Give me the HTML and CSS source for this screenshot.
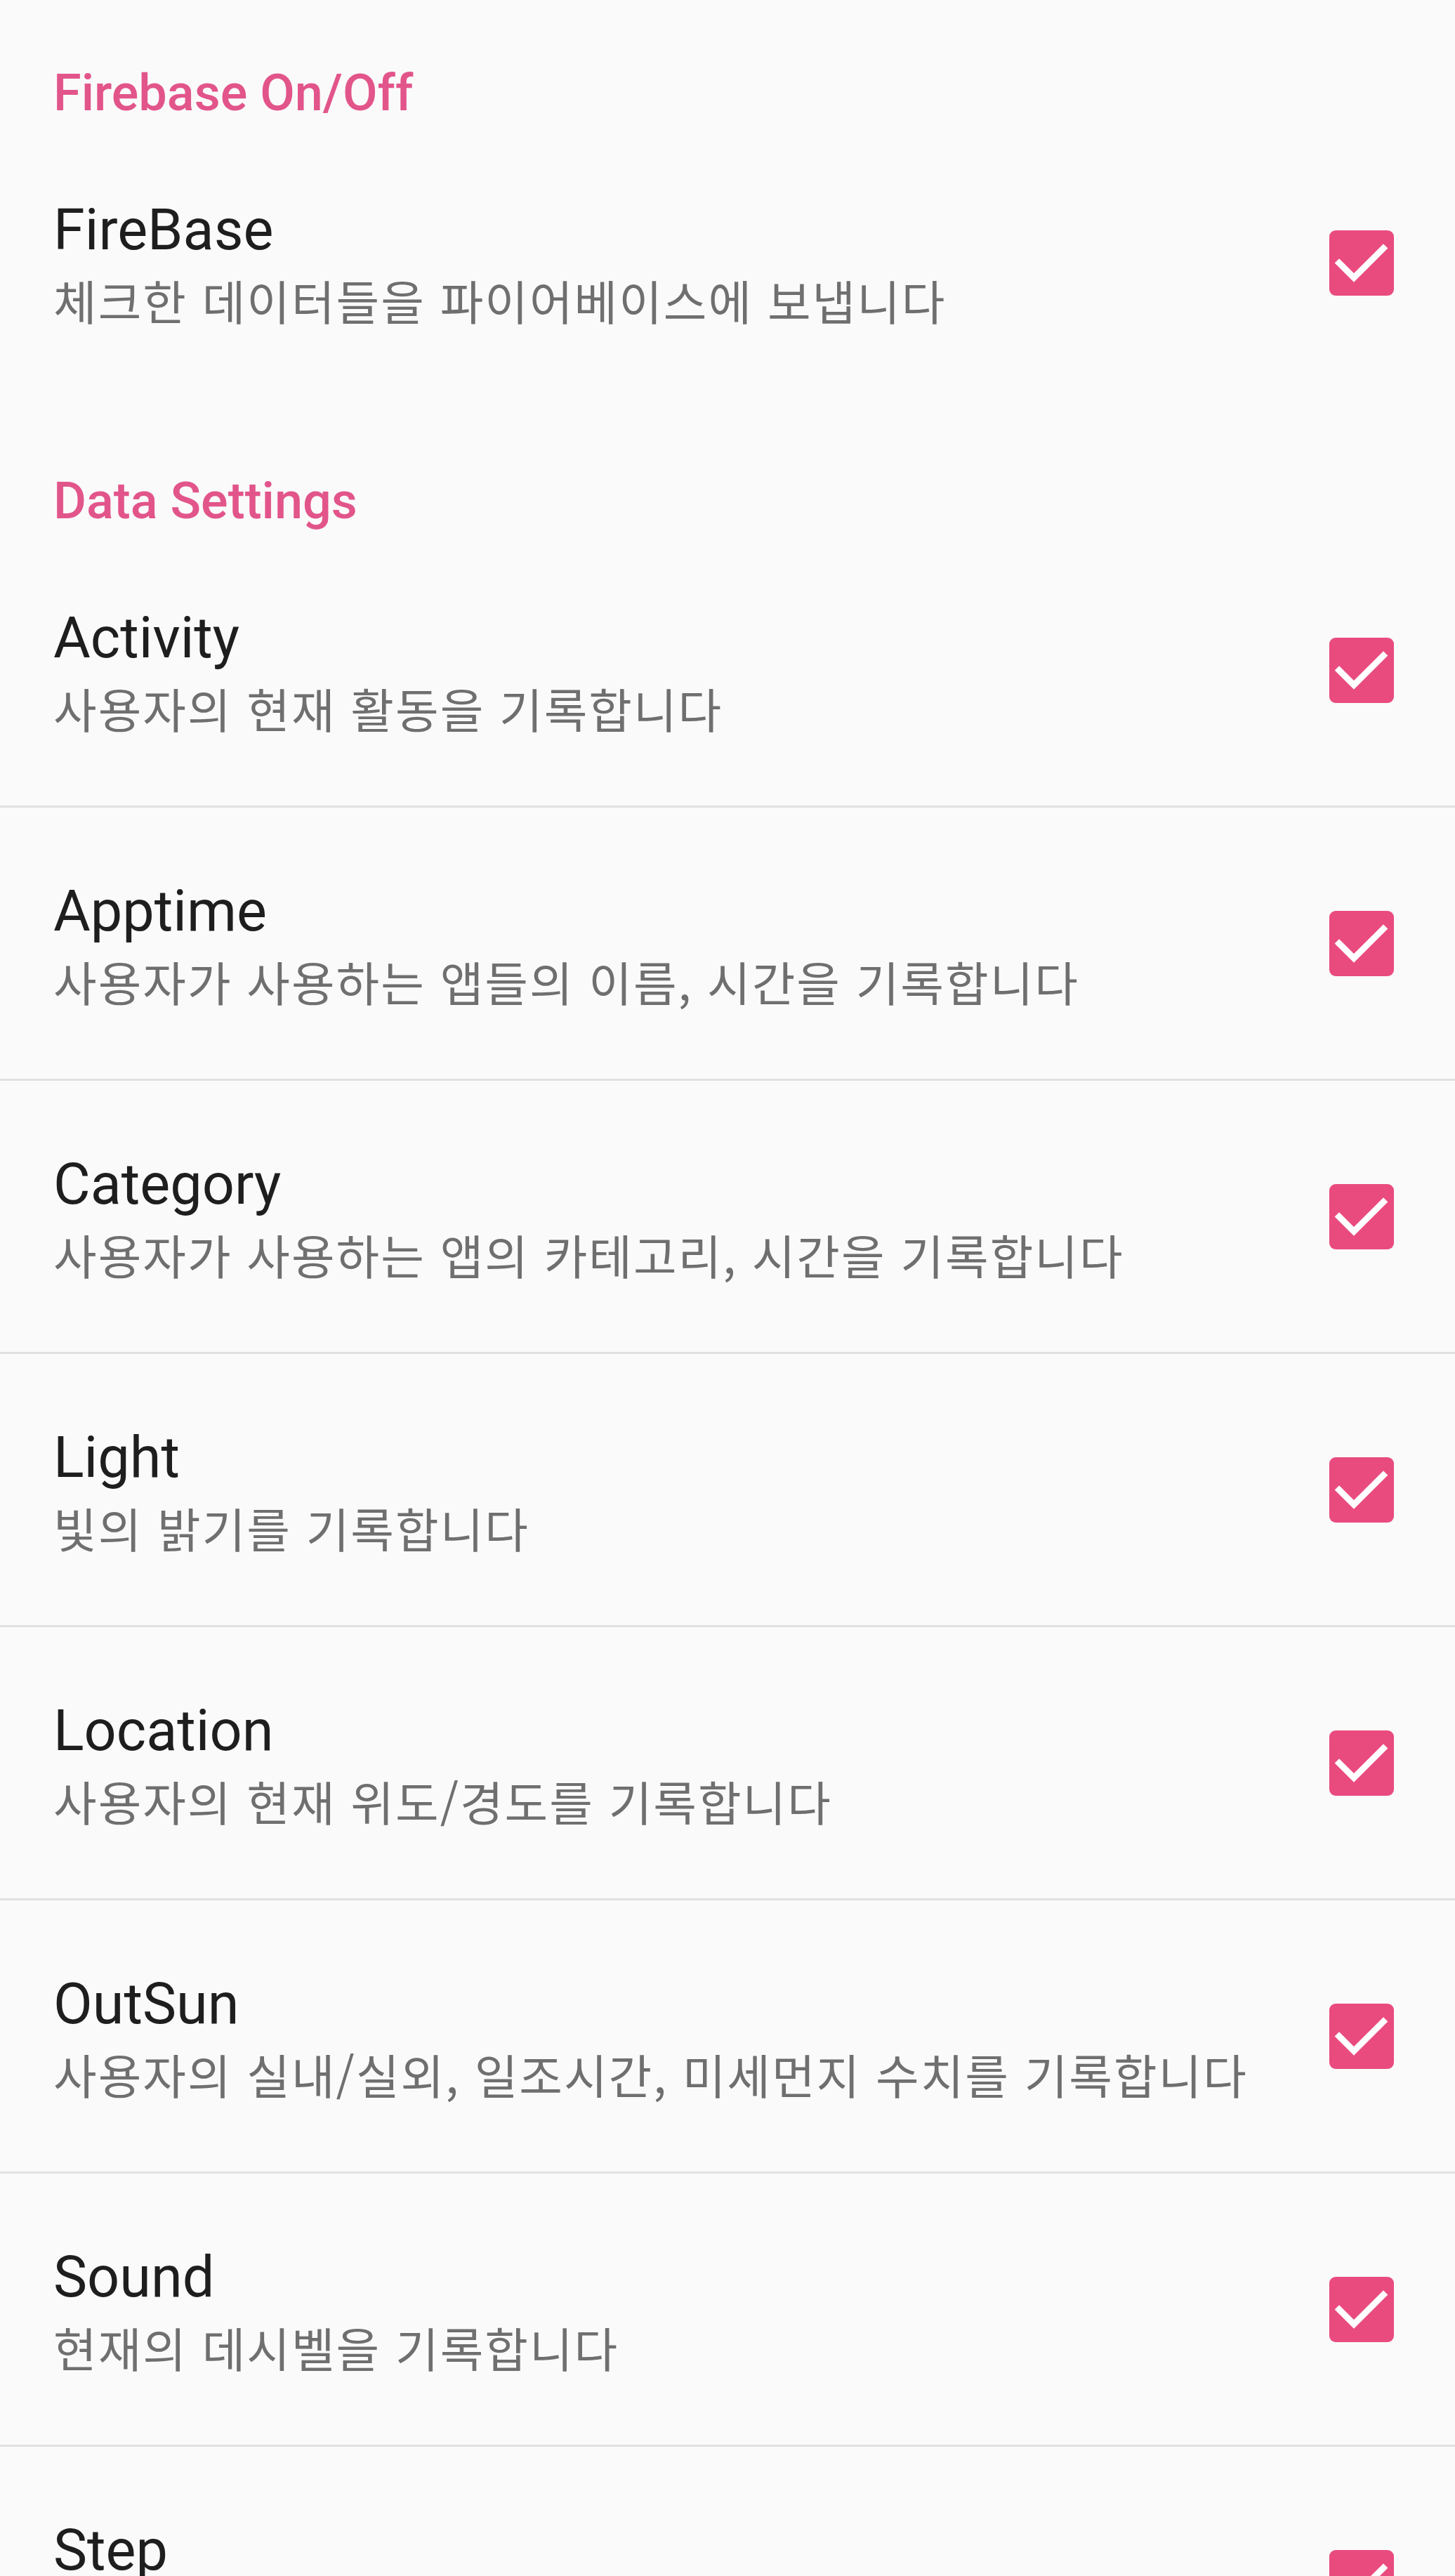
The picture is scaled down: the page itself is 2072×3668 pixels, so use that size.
FILE: index.html
```html
<!DOCTYPE html>
<html lang="ko">
<head>
<meta charset="utf-8">
<title>Settings</title>
<link rel="stylesheet" href="styles.css">
</head>
<body>
<div class="screen">
  <div class="category category--first">Firebase On/Off</div>
  <div class="pref pref--plain">
    <div class="pref-text">
      <div class="pref-title">FireBase</div>
      <div class="pref-summary">체크한 데이터들을 파이어베이스에 보냅니다</div>
    </div>
    <span class="checkbox"><svg viewBox="0 0 92 92"><polyline points="14,46 35,67 77,25"/></svg></span>
  </div>

  <div class="category">Data Settings</div>
  <div class="pref">
    <div class="pref-text">
      <div class="pref-title">Activity</div>
      <div class="pref-summary">사용자의 현재 활동을 기록합니다</div>
    </div>
    <span class="checkbox"><svg viewBox="0 0 92 92"><polyline points="14,46 35,67 77,25"/></svg></span>
  </div>
  <div class="pref">
    <div class="pref-text">
      <div class="pref-title">Apptime</div>
      <div class="pref-summary">사용자가 사용하는 앱들의 이름, 시간을 기록합니다</div>
    </div>
    <span class="checkbox"><svg viewBox="0 0 92 92"><polyline points="14,46 35,67 77,25"/></svg></span>
  </div>
  <div class="pref">
    <div class="pref-text">
      <div class="pref-title">Category</div>
      <div class="pref-summary">사용자가 사용하는 앱의 카테고리, 시간을 기록합니다</div>
    </div>
    <span class="checkbox"><svg viewBox="0 0 92 92"><polyline points="14,46 35,67 77,25"/></svg></span>
  </div>
  <div class="pref">
    <div class="pref-text">
      <div class="pref-title">Light</div>
      <div class="pref-summary">빛의 밝기를 기록합니다</div>
    </div>
    <span class="checkbox"><svg viewBox="0 0 92 92"><polyline points="14,46 35,67 77,25"/></svg></span>
  </div>
  <div class="pref">
    <div class="pref-text">
      <div class="pref-title">Location</div>
      <div class="pref-summary">사용자의 현재 위도/경도를 기록합니다</div>
    </div>
    <span class="checkbox"><svg viewBox="0 0 92 92"><polyline points="14,46 35,67 77,25"/></svg></span>
  </div>
  <div class="pref">
    <div class="pref-text">
      <div class="pref-title">OutSun</div>
      <div class="pref-summary">사용자의 실내/실외, 일조시간, 미세먼지 수치를 기록합니다</div>
    </div>
    <span class="checkbox"><svg viewBox="0 0 92 92"><polyline points="14,46 35,67 77,25"/></svg></span>
  </div>
  <div class="pref">
    <div class="pref-text">
      <div class="pref-title">Sound</div>
      <div class="pref-summary">현재의 데시벨을 기록합니다</div>
    </div>
    <span class="checkbox"><svg viewBox="0 0 92 92"><polyline points="14,46 35,67 77,25"/></svg></span>
  </div>
  <div class="pref">
    <div class="pref-text">
      <div class="pref-title">Step</div>
    </div>
    <span class="checkbox"><svg viewBox="0 0 92 92"><polyline points="14,46 35,67 77,25"/></svg></span>
  </div>
</div>
</body>
</html>
```

FILE: styles.css
```css
html, body {
  margin: 0;
  padding: 0;
  background: #fafafa;
}

.screen {
  width: 2072px;
  height: 3668px;
  overflow: hidden;
  background: #fafafa;
  font-family: Roboto, "Noto Sans CJK KR", sans-serif;
}

.category {
  box-sizing: border-box;
  height: 192px;
  padding: 103px 76px 5px 76px;
  font-size: 72px;
  line-height: 84px;
  font-weight: 500;
  color: #e2558a;
}

.category--first {
  height: 180px;
  padding-top: 91px;
}

.pref {
  box-sizing: border-box;
  height: 389px;
  display: flex;
  align-items: center;
  padding: 0 87px 0 76px;
  border-bottom: 3px solid #e1e1e1;
}

.pref--plain {
  border-bottom: none;
}

.pref-text {
  flex: 1;
  align-self: flex-start;
  padding-top: 100px;
}

.pref-title {
  font-size: 81px;
  line-height: 95px;
  color: #1e1e1e;
}

.pref-summary {
  margin-top: 5px;
  font-family: "Noto Sans CJK KR", sans-serif;
  font-size: 67px;
  line-height: 94px;
  letter-spacing: 2px;
  color: #6f6f6f;
}

.checkbox {
  flex: none;
  width: 92px;
  height: 93px;
  border-radius: 9px;
  background: #e94b7f;
  display: flex;
}

.checkbox svg {
  width: 92px;
  height: 93px;
}

.checkbox polyline {
  fill: none;
  stroke: #ffffff;
  stroke-width: 9;
  stroke-linecap: square;
  stroke-linejoin: miter;
}
```
